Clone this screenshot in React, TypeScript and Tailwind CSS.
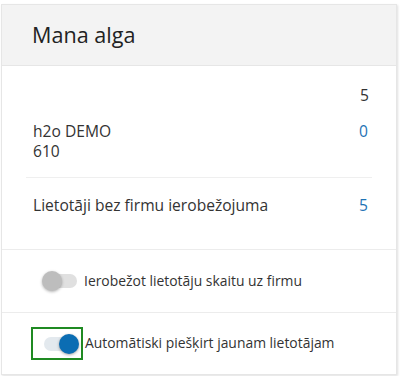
import React from "react";

function Switch({ on }: { on: boolean }) {
  return (
    <div className="relative w-[36px] h-[20px] flex items-center">
      <div className={on ? "w-[34px] h-[14px] rounded-full bg-[#e3e9ee] ml-[1px]" : "w-[34px] h-[14px] rounded-full bg-[#e0e0e0] ml-[1px]"} />
      <div
        className={
          on
            ? "absolute right-0 top-0 w-[20px] h-[20px] rounded-full bg-[#0b6db3] shadow-[0_1px_3px_rgba(0,0,0,0.35)]"
            : "absolute left-0 top-0 w-[20px] h-[20px] rounded-full bg-[#bdbdbd] shadow-[0_1px_3px_rgba(0,0,0,0.3)]"
        }
      />
    </div>
  );
}

export default function App() {
  return (
    <div className="w-[400px] h-[376px] bg-white pt-[4px] pl-[1px]" style={{ fontFamily: '"Open Sans", "Noto Sans", sans-serif' }}>
      <div className="w-[396px] border border-[#e6e6e6] shadow-[1px_1px_2px_rgba(0,0,0,0.12)] text-[#333]">
        <div className="h-[61px] bg-[#f3f3f3] border-b border-[#e6e6e6] flex items-center px-[30px]">
          <h1 className="text-[21.6px] text-[#222] leading-none">Mana alga</h1>
        </div>
        <div className="px-[24px] pt-[19px] pb-[34px] border-b border-[#ececec] text-[15.6px] leading-[20px]">
          <div className="flex justify-end pr-[3px]">5</div>
          <div className="flex justify-between pl-[7px] pr-[4px] pt-[16px] pb-[16px] border-b border-[#efefef]">
            <div>
              <div>h2o DEMO</div>
              <div>610</div>
            </div>
            <div className="text-[#1e73b5]">0</div>
          </div>
          <div className="flex justify-between pl-[7px] pr-[4px] pt-[17px]">
            <div>Lietotāji bez firmu ierobežojuma</div>
            <div className="text-[#1e73b5]">5</div>
          </div>
        </div>
        <div className="h-[63px] flex items-center pl-[40px] border-b border-[#ececec] text-[13.9px]">
          <Switch on={false} />
          <span className="ml-[6px]">Ierobežot lietotāju skaitu uz firmu</span>
        </div>
        <div className="h-[61px] flex items-center pl-[29px] text-[13.9px]">
          <div className="border-2 border-[#1f8a22] w-[52px] h-[33px] flex items-center pl-[10px]">
            <Switch on={true} />
          </div>
          <span className="ml-[2px]">Automātiski piešķirt jaunam lietotājam</span>
        </div>
      </div>
    </div>
  );
}
